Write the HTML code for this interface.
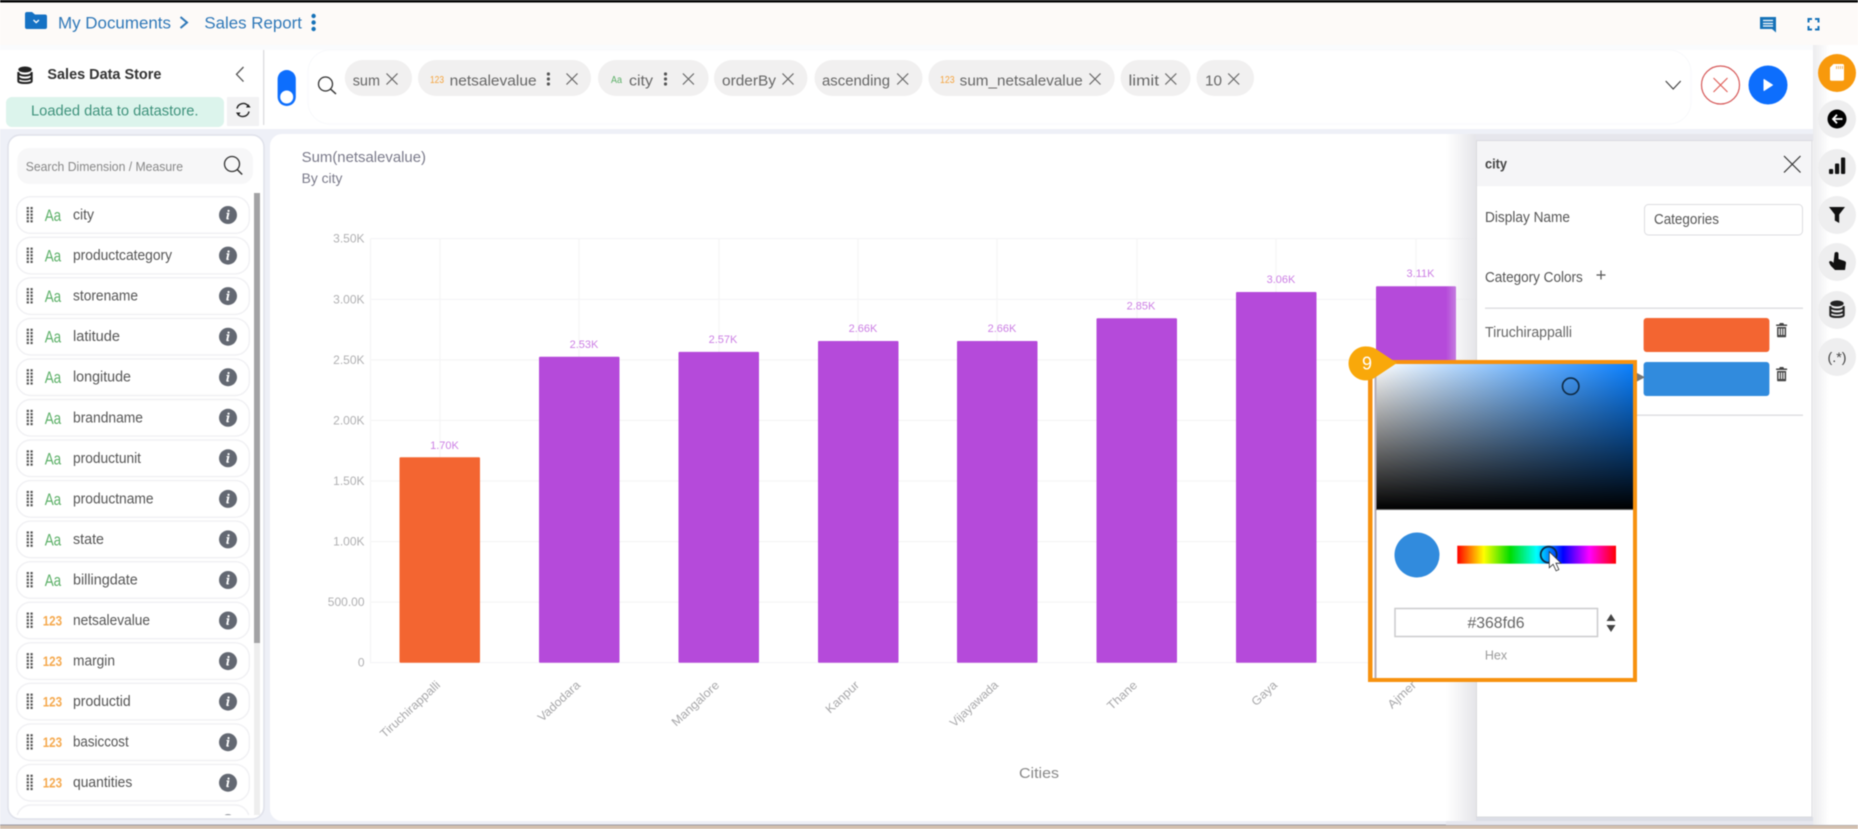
<!DOCTYPE html>
<html lang="en"><head><meta charset="utf-8"><title>Sales Report</title>
<style>html,body{margin:0;padding:0;background:#fff;overflow:hidden}svg{display:block;filter:blur(.45px)}text{font-family:"Liberation Sans",sans-serif}</style></head>
<body>
<svg xmlns="http://www.w3.org/2000/svg" width="1858" height="829" viewBox="0 0 1858 829">
<defs>
<linearGradient id="wh" x1="0" x2="1" y1="0" y2="0"><stop offset="0" stop-color="#fff"/><stop offset="1" stop-color="#fff" stop-opacity="0"/></linearGradient>
<linearGradient id="bk" x1="0" x2="0" y1="0" y2="1"><stop offset="0" stop-color="#000" stop-opacity="0"/><stop offset="1" stop-color="#000"/></linearGradient>
<linearGradient id="hue" x1="0" x2="1" y1="0" y2="0"><stop offset="0" stop-color="#f00"/><stop offset=".167" stop-color="#ff0"/><stop offset=".333" stop-color="#0d0"/><stop offset=".5" stop-color="#0ff"/><stop offset=".667" stop-color="#00f"/><stop offset=".833" stop-color="#f0f"/><stop offset="1" stop-color="#f00"/></linearGradient>
<linearGradient id="sh" x1="0" x2="1" y1="0" y2="0"><stop offset="0" stop-color="#e6e6ea" stop-opacity="0"/><stop offset="1" stop-color="#e4e4e8"/></linearGradient>
<linearGradient id="sh2" x1="0" x2="1" y1="0" y2="0"><stop offset="0" stop-color="#ececee"/><stop offset="1" stop-color="#fff"/></linearGradient>
<clipPath id="listclip"><rect x="8" y="135" width="256" height="680"/></clipPath>
<g id="gr" fill="#555"><rect x="-3" y="-8" width="2.2" height="2.2"/><rect x=".8" y="-8" width="2.2" height="2.2"/><rect x="-3" y="-4.7" width="2.2" height="2.2"/><rect x=".8" y="-4.7" width="2.2" height="2.2"/><rect x="-3" y="-1.4" width="2.2" height="2.2"/><rect x=".8" y="-1.4" width="2.2" height="2.2"/><rect x="-3" y="1.9" width="2.2" height="2.2"/><rect x=".8" y="1.9" width="2.2" height="2.2"/><rect x="-3" y="5.2" width="2.2" height="2.2"/><rect x=".8" y="5.2" width="2.2" height="2.2"/></g>
<g id="x1" stroke="#666" stroke-width="1.2" fill="none"><path d="M-5.5-5.5 5.5 5.5M5.5-5.5-5.5 5.5"/></g>
<g id="vd" fill="#555"><circle cx="0" cy="-5" r="1.6"/><circle cx="0" cy="0" r="1.6"/><circle cx="0" cy="5" r="1.6"/></g>
<g id="row"><rect x="16.7" y="-18.3" width="232.6" height="36.6" rx="14" fill="#fff" stroke="#f0f0f3" stroke-width="1.4"/><use href="#gr" x="29.7" y="0"/><circle cx="228" cy="0" r="9" fill="#636872"/><path d="M228.6-5.2a1.1 1.1 0 1 1-.1 0zM226.6-2.3h2.9l-1.3 5.4q-.1.6.9.3l-.2.9q-2.9.8-2.6-1l1-4.5-.9-.1z" fill="#fff"/></g>
<g id="tr" fill="#444"><path d="M-5.5-5.5h3l.8-1.5h3.4l.8 1.5h3v1.5h-11zM-4.5-3h9v9.5q0 .8-.8.8h-7.4q-.8 0-.8-.8zM-3-1.5v6.5h1.2v-6.5zM-.6-1.5v6.5h1.2v-6.5zM1.8-1.5v6.5H3v-6.5z" fill-rule="evenodd"/></g>
</defs>

<rect width="1858" height="829" fill="#fff"/>
<!-- top bar -->
<rect width="1858" height="45" fill="#fdfaf8"/>
<rect width="1858" height="2.5" fill="#000"/>
<rect y="45" width="1858" height="5" fill="#fafbfd"/>
<path d="M25 14a2 2 0 0 1 2-2h5l3 2.5h10a2 2 0 0 1 2 2v10.5a2 2 0 0 1-2 2H27a2 2 0 0 1-2-2z" fill="#1672c4"/>
<path d="M33.5 20l2.7 2.6 2.7-2.6" stroke="#fff" stroke-width="1.3" fill="none"/>
<text x="58" y="28.5" font-size="17" fill="#2f78b8" textLength="113" lengthAdjust="spacingAndGlyphs">My Documents</text>
<path d="M180.5 17l6.5 5.5-6.5 5.5" stroke="#2f78b8" stroke-width="2" fill="none"/>
<text x="204.4" y="28.5" font-size="17" fill="#2f78b8" textLength="97.5" lengthAdjust="spacingAndGlyphs">Sales Report</text>
<g fill="#1672b8"><circle cx="313.6" cy="16" r="2.2"/><circle cx="313.6" cy="22.5" r="2.2"/><circle cx="313.6" cy="29" r="2.2"/></g>
<path d="M1760 17h16v15.5l-4-3.5h-12z" fill="#1672b8"/><path d="M1763 20.5h10M1763 23.5h10M1763 26h10" stroke="#fff" stroke-width="1.3"/>
<path d="M1808.5 22.5v-3.5h3.5M1815 19h3.5v3.5M1818.5 26v3.5H1815M1812 29.5h-3.5V26" stroke="#1672b8" stroke-width="2" fill="none"/>

<!-- strip + bg -->
<rect y="129" width="1813" height="696" fill="#eef0f7"/>
<rect y="825" width="1858" height="4" fill="#d3bfae"/><rect y="824.5" width="1858" height="1" fill="#9a9aa4"/>

<!-- sidebar header -->
<ellipse cx="25" cy="69.5" rx="6.7" ry="3" fill="#222"/>
<path d="M18.3 72.5c0 4.2 13.4 4.2 13.4 0M18.3 76.5c0 4.2 13.4 4.2 13.4 0M18.3 72v9c0 2.7 13.4 2.7 13.4 0v-9" stroke="#222" stroke-width="2" fill="none"/>
<text x="47.4" y="79" font-size="14.5" font-weight="bold" fill="#333" textLength="114" lengthAdjust="spacingAndGlyphs">Sales Data Store</text>
<path d="M243.5 67l-7 7.3 7 7.3" stroke="#555" stroke-width="1.3" fill="none"/>
<rect x="263.2" y="50" width="1" height="75" fill="#d2d2d6"/>
<rect x="6" y="97" width="218" height="30" rx="6" fill="#dcf4ec"/>
<text x="31" y="115.5" font-size="15" fill="#3f927c" textLength="167.5" lengthAdjust="spacingAndGlyphs">Loaded data to datastore.</text>
<rect x="227" y="97" width="32" height="29" fill="#f2f2f3"/>
<path d="M237 108.5a6.3 6.3 0 0 1 11.2-2.5M249 111.5a6.3 6.3 0 0 1-11.2 2.5" stroke="#222" stroke-width="1.4" fill="none"/><path d="M246 107.5h4.6l-2.3-3.4zM240.600 112.5h-4.600l2.300 3.400z" fill="#222"/>

<!-- query bar -->
<rect x="308" y="50" width="1383" height="74" rx="22" fill="#fff" stroke="#f8f9fb"/>
<rect x="277.6" y="70" width="18.2" height="36" rx="9.1" fill="#0d6efd"/><circle cx="286.7" cy="97" r="6.5" fill="#fff"/>
<circle cx="325.500" cy="84" r="7" fill="none" stroke="#333" stroke-width="1.3"/><path d="M330.500 89l5.500 5" stroke="#333" stroke-width="1.5"/>
<g fill="#f1f0f0">
<rect x="344.8" y="60" width="67.2" height="36" rx="18"/><rect x="418" y="60" width="173" height="36" rx="18"/><rect x="598" y="60" width="110.6" height="36" rx="18"/><rect x="714" y="60" width="93.4" height="36" rx="18"/><rect x="814.5" y="60" width="108" height="36" rx="18"/><rect x="928.4" y="60" width="186.3" height="36" rx="18"/><rect x="1120.6" y="60" width="70" height="36" rx="18"/><rect x="1196.5" y="60" width="57.5" height="36" rx="18"/>
</g>
<g font-size="14.5" fill="#666">
<text x="352.7" y="85.500" textLength="27.3" lengthAdjust="spacingAndGlyphs">sum</text>
<text x="449.6" y="85.500" textLength="87" lengthAdjust="spacingAndGlyphs">netsalevalue</text>
<text x="629" y="85.500" textLength="24" lengthAdjust="spacingAndGlyphs">city</text>
<text x="722" y="85.500" textLength="54" lengthAdjust="spacingAndGlyphs">orderBy</text>
<text x="822" y="85.500" textLength="68" lengthAdjust="spacingAndGlyphs">ascending</text>
<text x="959.7" y="85.500" textLength="123" lengthAdjust="spacingAndGlyphs">sum_netsalevalue</text>
<text x="1128.5" y="85.500" textLength="30.5" lengthAdjust="spacingAndGlyphs">limit</text>
<text x="1205" y="85.500" textLength="17" lengthAdjust="spacingAndGlyphs">10</text>
</g>
<text x="430" y="83" font-size="10" fill="#f5a33c" textLength="14" lengthAdjust="spacingAndGlyphs">123</text>
<text x="940" y="83" font-size="10" fill="#f5a33c" textLength="14.6" lengthAdjust="spacingAndGlyphs">123</text>
<text x="611" y="83" font-size="10" fill="#5cb068" textLength="11" lengthAdjust="spacingAndGlyphs">Aa</text>
<use href="#x1" x="392" y="79"/><use href="#x1" x="572" y="79"/><use href="#x1" x="688.4" y="79"/><use href="#x1" x="788" y="79"/><use href="#x1" x="902.7" y="79"/><use href="#x1" x="1095" y="79"/><use href="#x1" x="1170.8" y="79"/><use href="#x1" x="1233.7" y="79"/>
<use href="#vd" x="548.4" y="79"/><use href="#vd" x="665.5" y="79"/>
<path d="M1665.7 81l7.5 8 7.5-8" stroke="#444" stroke-width="1.2" fill="none"/>
<circle cx="1720.5" cy="85" r="19" fill="#fff" stroke="#d65a5a" stroke-width="1.2"/><path d="M1713.5 78l14 14M1727.5 78l-14 14" stroke="#e0605a" stroke-width="1.2"/>
<circle cx="1768" cy="85" r="19.5" fill="#0d6efd"/><path d="M1764 79.5v11l8.5-5.5z" fill="#fff" stroke="#fff" stroke-linejoin="round"/>

<!-- left list panel -->
<rect x="8" y="135" width="256" height="684" rx="12" fill="#fff" stroke="#dfe1ea" stroke-width="1.5"/>
<rect x="17.4" y="148" width="235.6" height="36" rx="12" fill="#f7f7f8"/>
<text x="25.7" y="171" font-size="12.5" fill="#888" textLength="157.3" lengthAdjust="spacingAndGlyphs">Search Dimension / Measure</text>
<circle cx="232" cy="164" r="7.5" fill="none" stroke="#333" stroke-width="1.3"/><path d="M237.2 169.5l5 5" stroke="#333" stroke-width="1.5"/>
<rect x="254" y="193" width="6" height="622" fill="#eee"/><rect x="254" y="193" width="6" height="450" fill="#a2a2a4"/>
<g clip-path="url(#listclip)">
<use href="#row" x="0" y="215"/><use href="#row" x="0" y="255.6"/><use href="#row" x="0" y="296.1"/><use href="#row" x="0" y="336.7"/><use href="#row" x="0" y="377.2"/><use href="#row" x="0" y="417.8"/><use href="#row" x="0" y="458.3"/><use href="#row" x="0" y="498.9"/><use href="#row" x="0" y="539.4"/><use href="#row" x="0" y="580"/><use href="#row" x="0" y="620.5"/><use href="#row" x="0" y="661.1"/><use href="#row" x="0" y="701.6"/><use href="#row" x="0" y="742.2"/><use href="#row" x="0" y="782.7"/><use href="#row" x="0" y="823.3"/>
</g>
<g font-size="17" fill="#5cb068">
<text x="44.7" y="221" textLength="16.5" lengthAdjust="spacingAndGlyphs">Aa</text><text x="44.7" y="261.500" textLength="16.5" lengthAdjust="spacingAndGlyphs">Aa</text><text x="44.7" y="302" textLength="16.5" lengthAdjust="spacingAndGlyphs">Aa</text><text x="44.7" y="342.700" textLength="16.5" lengthAdjust="spacingAndGlyphs">Aa</text><text x="44.7" y="383.200" textLength="16.5" lengthAdjust="spacingAndGlyphs">Aa</text><text x="44.7" y="423.800" textLength="16.5" lengthAdjust="spacingAndGlyphs">Aa</text><text x="44.7" y="464.300" textLength="16.5" lengthAdjust="spacingAndGlyphs">Aa</text><text x="44.7" y="504.900" textLength="16.5" lengthAdjust="spacingAndGlyphs">Aa</text><text x="44.7" y="545.400" textLength="16.5" lengthAdjust="spacingAndGlyphs">Aa</text><text x="44.7" y="586" textLength="16.5" lengthAdjust="spacingAndGlyphs">Aa</text>
</g>
<g font-size="14" font-weight="bold" fill="#f5a94e">
<text x="42.7" y="625.5" textLength="19.4" lengthAdjust="spacingAndGlyphs">123</text><text x="42.7" y="666" textLength="19.4" lengthAdjust="spacingAndGlyphs">123</text><text x="42.7" y="706.6" textLength="19.4" lengthAdjust="spacingAndGlyphs">123</text><text x="42.7" y="747.2" textLength="19.4" lengthAdjust="spacingAndGlyphs">123</text><text x="42.7" y="787.7" textLength="19.4" lengthAdjust="spacingAndGlyphs">123</text>
</g>
<g font-size="14.5" fill="#555">
<text x="73" y="219.5" textLength="21" lengthAdjust="spacingAndGlyphs">city</text>
<text x="73" y="260" textLength="99" lengthAdjust="spacingAndGlyphs">productcategory</text>
<text x="73" y="300.6" textLength="65" lengthAdjust="spacingAndGlyphs">storename</text>
<text x="73" y="341.2" textLength="47" lengthAdjust="spacingAndGlyphs">latitude</text>
<text x="73" y="381.7" textLength="58" lengthAdjust="spacingAndGlyphs">longitude</text>
<text x="73" y="422.3" textLength="70" lengthAdjust="spacingAndGlyphs">brandname</text>
<text x="73" y="462.8" textLength="68" lengthAdjust="spacingAndGlyphs">productunit</text>
<text x="73" y="503.4" textLength="80.6" lengthAdjust="spacingAndGlyphs">productname</text>
<text x="73" y="543.9" textLength="31" lengthAdjust="spacingAndGlyphs">state</text>
<text x="73" y="584.5" textLength="64.7" lengthAdjust="spacingAndGlyphs">billingdate</text>
<text x="73" y="625" textLength="77" lengthAdjust="spacingAndGlyphs">netsalevalue</text>
<text x="73" y="665.6" textLength="42" lengthAdjust="spacingAndGlyphs">margin</text>
<text x="73" y="706.1" textLength="57.7" lengthAdjust="spacingAndGlyphs">productid</text>
<text x="73" y="746.7" textLength="55.7" lengthAdjust="spacingAndGlyphs">basiccost</text>
<text x="73" y="787.2" textLength="59.3" lengthAdjust="spacingAndGlyphs">quantities</text>
</g>

<!-- chart panel -->
<path d="M282 134H1813V821H282a12 12 0 0 1-12-12V146a12 12 0 0 1 12-12z" fill="#fff"/>
<text x="301.7" y="162" font-size="14.5" fill="#7a7a8a" textLength="124.3" lengthAdjust="spacingAndGlyphs">Sum(netsalevalue)</text>
<text x="301.7" y="183" font-size="13.5" fill="#7a7a8a" textLength="40.7" lengthAdjust="spacingAndGlyphs">By city</text>
<g stroke="#f5f5f6" stroke-width="1.2">
<path d="M370 238.7H1480M370 299.3H1480M370 359.9H1480M370 420.4H1480M370 481H1480M370 541.6H1480M370 602.1H1480M370 662.7H1480"/>
<path d="M370.5 238.7V662.7M440 238.7V662.7M579 238.7V662.7M719 238.7V662.7M858 238.7V662.7M997 238.7V662.7M1137 238.7V662.7M1276 238.7V662.7M1416 238.7V662.7"/>
</g>
<g font-size="12" fill="#b0b0b2" text-anchor="end">
<text x="364.5" y="242.7">3.50K</text><text x="364.5" y="303.3">3.00K</text><text x="364.5" y="363.9">2.50K</text><text x="364.5" y="424.4">2.00K</text><text x="364.5" y="485">1.50K</text><text x="364.5" y="545.6">1.00K</text><text x="364.5" y="606.1">500.00</text><text x="364.5" y="666.7">0</text>
</g>
<rect x="399.5" y="457.3" width="80.5" height="205.4" rx="1" fill="#f36531"/>
<g fill="#b54ada">
<rect x="539" y="356.7" width="80.5" height="306" rx="1"/><rect x="678.5" y="351.9" width="80.5" height="310.8" rx="1"/><rect x="818" y="341" width="80.5" height="321.7" rx="1"/><rect x="957" y="341" width="80.5" height="321.7" rx="1"/><rect x="1096.5" y="318.3" width="80.5" height="344.4" rx="1"/><rect x="1236" y="292" width="80.5" height="370.7" rx="1"/><rect x="1376" y="286.3" width="80" height="376.4" rx="1"/>
</g>
<g font-size="11" fill="#cc7fe4" text-anchor="middle">
<text x="444.5" y="449">1.70K</text><text x="584" y="348">2.53K</text><text x="723" y="343">2.57K</text><text x="863" y="332">2.66K</text><text x="1002" y="332">2.66K</text><text x="1141" y="309.5">2.85K</text><text x="1281" y="283">3.06K</text><text x="1420.5" y="277">3.11K</text>
</g>
<g font-size="12" fill="#a8a8aa" text-anchor="end">
<text transform="translate(441 686) rotate(-43)" textLength="77" lengthAdjust="spacingAndGlyphs">Tiruchirappalli</text>
<text transform="translate(581 686) rotate(-43)" textLength="53" lengthAdjust="spacingAndGlyphs">Vadodara</text>
<text transform="translate(720 686) rotate(-43)" textLength="60" lengthAdjust="spacingAndGlyphs">Mangalore</text>
<text transform="translate(860 686) rotate(-43)" textLength="41" lengthAdjust="spacingAndGlyphs">Kanpur</text>
<text transform="translate(999 686) rotate(-43)" textLength="61" lengthAdjust="spacingAndGlyphs">Vijayawada</text>
<text transform="translate(1138 686) rotate(-43)" textLength="36" lengthAdjust="spacingAndGlyphs">Thane</text>
<text transform="translate(1278 686) rotate(-43)" textLength="30" lengthAdjust="spacingAndGlyphs">Gaya</text>
<text transform="translate(1417 686) rotate(-43)" textLength="34" lengthAdjust="spacingAndGlyphs">Ajmer</text>
</g>
<text x="1039" y="778" font-size="15" fill="#888" text-anchor="middle" textLength="40" lengthAdjust="spacingAndGlyphs">Cities</text>
<rect x="1446" y="134" width="31" height="687" fill="url(#sh)"/>
<rect x="1476" y="134" width="337" height="7" fill="#e6e6ec"/>
<rect x="1476" y="817" width="337" height="8" fill="#dcdee6"/>
<rect x="1446" y="821" width="367" height="4" fill="#e6e7ef"/>

<!-- right config panel -->
<rect x="1476.5" y="140.7" width="335.5" height="676.3" fill="#fff" stroke="#dadade"/>
<rect x="1477" y="141.2" width="334.5" height="45" fill="#f5f5f7"/>
<text x="1485" y="168.5" font-size="14" font-weight="bold" fill="#444" textLength="22" lengthAdjust="spacingAndGlyphs">city</text>
<path d="M1784 156l16.5 16.5M1800.5 156L1784 172.5" stroke="#333" stroke-width="1.2"/>
<text x="1485" y="222" font-size="14.5" fill="#555" textLength="85" lengthAdjust="spacingAndGlyphs">Display Name</text>
<rect x="1644.5" y="204.5" width="158" height="30.5" rx="4" fill="#fff" stroke="#dcdce0"/>
<text x="1654" y="224" font-size="14.5" fill="#555" textLength="65" lengthAdjust="spacingAndGlyphs">Categories</text>
<text x="1485" y="282" font-size="14.5" fill="#555" textLength="97.8" lengthAdjust="spacingAndGlyphs">Category Colors</text>
<path d="M1601 270.5v9M1596.5 275h9" stroke="#555" stroke-width="1.2"/>
<rect x="1485" y="307.5" width="318" height="1.4" fill="#dedee0"/>
<text x="1485" y="337" font-size="14.5" fill="#666" textLength="87" lengthAdjust="spacingAndGlyphs">Tiruchirappalli</text>
<rect x="1643.6" y="318" width="125.8" height="34" rx="3" fill="#f36531"/>
<rect x="1643.6" y="362" width="125.8" height="34" rx="3" fill="#318bdd"/>
<use href="#tr" x="1781.6" y="330"/><use href="#tr" x="1781.6" y="374"/>
<rect x="1485" y="414.5" width="318" height="1.4" fill="#dedee0"/>
<path d="M1637 373v8.5l8-4.2z" fill="#777"/>

<!-- right rail -->
<rect x="1813" y="45" width="45" height="780" fill="#fff"/>
<rect x="1813" y="45" width="16" height="780" fill="url(#sh2)"/>
<circle cx="1837" cy="73" r="19" fill="#f8990c"/>
<path d="M1833.5 64h9q1.5 0 1.5 1.5v13.7q0 1.5-1.5 1.5h-11q-1.5 0-1.5-1.5V67.5z" fill="#fff"/>
<path d="M1836.5 66v3M1838.5 66v3M1840.5 66v3M1842.5 66v3" stroke="#f2b560" stroke-width="1"/>
<g fill="#eeeeef"><circle cx="1837" cy="119" r="19"/><circle cx="1837" cy="168" r="19"/><circle cx="1837" cy="215" r="19"/><circle cx="1837" cy="262" r="19"/><circle cx="1837" cy="310" r="19"/><circle cx="1837" cy="357" r="19"/></g>
<circle cx="1837" cy="119" r="9.5" fill="#000"/><path d="M1842.5 119h-9M1837 114.8l-4 4.2 4 4.2" stroke="#fff" stroke-width="1.8" fill="none"/>
<g fill="#111"><rect x="1829" y="169" width="4.2" height="5" rx="1"/><rect x="1835" y="163.5" width="4.2" height="10.5" rx="1"/><rect x="1841" y="157.5" width="4.2" height="16.5" rx="1"/></g>
<path d="M1829 207h16l-5.8 7.5v8.5l-4.4-2.5v-6z" fill="#111"/>
<path d="M1834.5 254q0-2 2-2t2 2v5l6 2q1.5.5 1.5 2l-1 7h-10l-4-4q-1.5-2-2-4l1-1q2 0 3.5 2z" fill="#111"/>
<ellipse cx="1837" cy="303.5" rx="6.7" ry="3" fill="#222"/>
<path d="M1830.3 306.5c0 4 13.4 4 13.4 0M1830.3 310.5c0 4 13.4 4 13.4 0M1830.3 306v9c0 2.7 13.4 2.7 13.4 0v-9" stroke="#222" stroke-width="2" fill="none"/>
<text x="1827.5" y="362" font-size="14" fill="#444" textLength="19" lengthAdjust="spacingAndGlyphs">(.*)</text>

<!-- color picker -->
<rect x="1370" y="362" width="265" height="318" fill="#fff"/>
<rect x="1376" y="364" width="257" height="145.5" fill="#0a80ff"/>
<rect x="1376" y="364" width="257" height="145.5" fill="url(#wh)"/>
<rect x="1376" y="364" width="257" height="145.5" fill="url(#bk)"/>
<rect x="1374.5" y="364" width="2" height="314" fill="#b5aeb9"/>
<rect x="1376" y="509" width="257" height="1" fill="#666"/>
<rect x="1370" y="360" width="267" height="4" fill="#f7920f"/>
<rect x="1368" y="678" width="269" height="4" fill="#f7920f"/>
<rect x="1368" y="360" width="4.5" height="322" fill="#f7920f"/>
<rect x="1633" y="360" width="4" height="322" fill="#f7920f"/>
<circle cx="1570.7" cy="386.3" r="8.2" fill="none" stroke="#0e2a44" stroke-width="1.6"/>
<circle cx="1417" cy="555" r="22.5" fill="#318bdd"/>
<rect x="1457.3" y="545.7" width="158.7" height="18" fill="url(#hue)"/>
<circle cx="1548.7" cy="554.7" r="8" fill="none" stroke="#0e2a44" stroke-width="1.8"/>
<path d="M1549.3 551.7v16l3.8-3.4 3 6.6 2.8-1.3-3-6.4h5.2z" fill="#fff" stroke="#333" stroke-width=".8"/>
<rect x="1395" y="608.5" width="202.5" height="28" fill="#fff" stroke="#cbcbcd" stroke-width="1.5"/>
<text x="1496" y="628" font-size="15.5" fill="#666" text-anchor="middle" textLength="57" lengthAdjust="spacingAndGlyphs">#368fd6</text>
<path d="M1611 614l4.5 7h-9zM1611 632l4.5-7h-9z" fill="#444"/>
<text x="1496" y="659.5" font-size="12.5" fill="#9a9a9a" text-anchor="middle">Hex</text>

<!-- step badge -->
<path d="M1367 346.5c3 0 6 .8 8.5 2.3L1397 363l-21.5 14.2a17 17 0 1 1-8.5-30.7z" fill="#f9a80a"/>
<text x="1367" y="369.5" font-size="18" fill="#fff" text-anchor="middle">9</text>
</svg>
</body></html>
